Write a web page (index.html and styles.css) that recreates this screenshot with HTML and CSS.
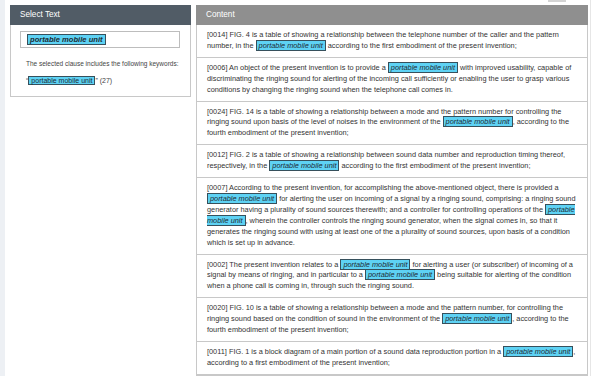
FILE: index.html
```html
<!DOCTYPE html>
<html lang="en">
<head>
    <meta charset="UTF-8">
    <meta name="viewport" content="width=device-width, initial-scale=1.0">
    <title>Keyword Clauses</title>
    <link rel="stylesheet" href="styles.css">
</head>
<body>
    <div class="page">
        <div class="toolbar">
            <div class="tool-button"></div>
        </div>
        <div class="layout">
            <div class="panel select-panel">
                <div class="panel-header dark">Select Text</div>
                <div class="select-body">
                    <div class="text-input">
                        <span class="kw kw-strong">portable mobile unit</span>
                    </div>
                    <p class="note">The selected clause includes the following keywords:</p>
                    <p class="keyword-line">“<span class="kw kw-plain">portable mobile unit</span>” (27)</p>
                </div>
            </div>

            <div class="panel content-panel">
                <div class="panel-header grey">Content</div>
                <div class="clause">[0014] FIG. 4 is a table of showing a relationship between the telephone number of the caller and the pattern number, in the <span class="kw">portable mobile unit</span> according to the first embodiment of the present invention;</div>
                <div class="clause">[0006] An object of the present invention is to provide a <span class="kw">portable mobile unit</span> with improved usability, capable of discriminating the ringing sound for alerting of the incoming call sufficiently or enabling the user to grasp various conditions by changing the ringing sound when the telephone call comes in.</div>
                <div class="clause">[0024] FIG. 14 is a table of showing a relationship between a mode and the pattern number for controlling the ringing sound upon basis of the level of noises in the environment of the <span class="kw">portable mobile unit</span>, according to the fourth embodiment of the present invention;</div>
                <div class="clause">[0012] FIG. 2 is a table of showing a relationship between sound data number and reproduction timing thereof, respectively, in the <span class="kw">portable mobile unit</span> according to the first embodiment of the present invention;</div>
                <div class="clause">[0007] According to the present invention, for accomplishing the above-mentioned object, there is provided a <span class="kw">portable mobile unit</span> for alerting the user on incoming of a signal by a ringing sound, comprising: a ringing sound generator having a plurality of sound sources therewith; and a controller for controlling operations of the <span class="kw">portable mobile unit</span>, wherein the controller controls the ringing sound generator, when the signal comes in, so that it generates the ringing sound with using at least one of the a plurality of sound sources, upon basis of a condition which is set up in advance.</div>
                <div class="clause">[0002] The present invention relates to a <span class="kw">portable mobile unit</span> for alerting a user (or subscriber) of incoming of a signal by means of ringing, and in particular to a <span class="kw">portable mobile unit</span> being suitable for alerting of the condition when a phone call is coming in, through such the ringing sound.</div>
                <div class="clause">[0020] FIG. 10 is a table of showing a relationship between a mode and the pattern number, for controlling the ringing sound based on the condition of sound in the environment of the <span class="kw">portable mobile unit</span>, according to the fourth embodiment of the present invention;</div>
                <div class="clause">[0011] FIG. 1 is a block diagram of a main portion of a sound data reproduction portion in a <span class="kw">portable mobile unit</span>, according to a first embodiment of the present invention;</div>
            </div>
        </div>
    </div>
</body>
</html>
```

FILE: styles.css
```css
html, body {
    margin: 0;
    height: 100%;
    overflow: hidden;
}
body {
    font-family: 'Liberation Sans', Arial, sans-serif;
    background: #ffffff;
    color: #333;
}
.page {
    border-left: 5px solid #edf0f4;
    width: 591px;
    height: 100%;
    border-right: 1px solid #e6e6e6;
    box-sizing: border-box;
}
.toolbar {
    height: 5px;
    display: flex;
    justify-content: flex-end;
    padding-right: 24px;
}
.tool-button {
    width: 18px;
    height: 2px;
    background: #d4d4d4;
}
.layout {
    display: flex;
    align-items: flex-start;
    gap: 5px;
    padding-left: 5px;
}
.panel {
    border: 1px solid #c8c8c8;
    border-top: none;
    background: #fff;
}
.select-panel {
    width: 181px;
    box-sizing: border-box;
}
.content-panel {
    width: 392px;
    box-sizing: border-box;
}
.panel-header {
    height: 20px;
    line-height: 20px;
    padding-left: 10px;
    color: #fff;
    font-size: 8.2px;
    margin: 0 -1px;
}
.panel-header.dark {
    background: #515c66;
}
.panel-header.grey {
    background: #8f8f8f;
}
.select-body {
    padding: 6px 9px 10px;
}
.text-input {
    width: 160px;
    height: 17px;
    box-sizing: border-box;
    border: 1px solid #bdbdbd;
    padding: 3px 6px;
    font-size: 7.6px;
    line-height: 9px;
}
.note {
    margin: 11px 0 0 6px;
    font-size: 6.5px;
    line-height: 9px;
    color: #444;
    white-space: nowrap;
}
.keyword-line {
    margin: 8px 0 0 6px;
    font-size: 7px;
    line-height: 10px;
    color: #444;
}
.kw {
    background: #5ed2f4;
    border: 1px solid #36505c;
    padding: 0 2px;
    font-style: italic;
    color: #1d2b33;
}
.kw-strong {
    font-weight: bold;
}
.kw-plain {
    font-style: normal;
}
.clause {
    padding: 5px 10px 5px;
    font-size: 7.35px;
    line-height: 10.9px;
    border-bottom: 1px solid #c8c8c8;
    color: #333;
}
```
